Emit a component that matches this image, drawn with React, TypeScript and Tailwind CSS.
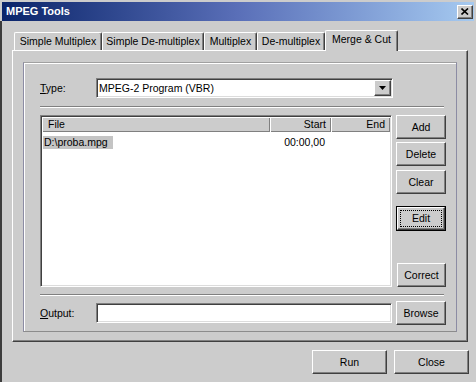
import React from "react";

const raised =
  "border border-t-white border-l-white border-r-[#404040] border-b-[#404040] shadow-[inset_-1px_-1px_0_#808080] bg-[#cccccc]";
const sunken =
  "border border-t-[#808080] border-l-[#808080] border-r-white border-b-white shadow-[inset_1px_1px_0_#404040,inset_-1px_-1px_0_#dcdcdc] p-[1px] bg-white";

function Btn({ label, className = "" }: { label: string; className?: string }) {
  return (
    <div className={`${raised} flex items-center justify-center ${className}`}>
      <span>{label}</span>
    </div>
  );
}

const tabs = [
  { label: "Simple Multiplex", w: "w-[88px]" },
  { label: "Simple De-multiplex", w: "w-[102px]" },
  { label: "Multiplex", w: "w-[53px]" },
  { label: "De-multiplex", w: "w-[68px]" },
];

export default function App() {
  return (
    <div className="w-[476px] h-[382px] bg-[#cccccc] overflow-hidden font-['Liberation_Sans',Arial,sans-serif] text-[10.5px] text-black leading-none select-none">
      {/* Title bar */}
      <div className="mx-[2px] mt-[2px] h-[19px] flex items-center justify-between bg-linear-to-r from-[#0a246a] via-[#5a6fb8] to-[#a6caf0]">
        <span className="pl-[4px] font-bold text-white text-[11px]">MPEG Tools</span>
        <div className={`${raised} w-[16px] h-[14px] mr-[1px] flex items-center justify-center`}>
          <svg width="8" height="7" viewBox="0 0 8 7">
            <path d="M0.5 0.5 L7 6.5 M7 0.5 L0.5 6.5" stroke="#000" strokeWidth="1.6" />
          </svg>
        </div>
      </div>

      {/* Body */}
      <div className="h-[361px] border-l-2 border-l-[#3c3c3c] pl-[10px] pr-[8px] pt-[9px]">
        {/* Tabs */}
        <div className="flex items-end h-[20px] pl-[2px]">
          {tabs.map((t) => (
            <div
              key={t.label}
              className={`${t.w} h-[18px] flex items-center justify-center rounded-t-[2px] border-t border-l border-r border-t-white border-l-white border-r-[#404040] shadow-[inset_-1px_0_0_#808080]`}
            >
              {t.label}
            </div>
          ))}
          <div className="relative z-10 w-[73px] h-[21px] -mb-[1px] pb-[3px] flex items-center justify-center rounded-t-[2px] bg-[#cccccc] border-t border-l border-r border-t-white border-l-white border-r-[#404040] shadow-[inset_-1px_0_0_#808080]">
            Merge &amp; Cut
          </div>
        </div>

        {/* Panel */}
        <div className="h-[292px] border border-t-white border-l-white border-r-[#404040] border-b-[#404040] shadow-[inset_-1px_-1px_0_#808080] pl-[10px] pt-[11px]">
          <div className="w-[434px] h-[270px] border border-t-[#a0a0a0] border-l-[#8c8ca4] border-r-[#8c8ca4] border-b-[#8c8c8c] shadow-[inset_1px_1px_0_#ffffff] pl-[16px] pt-[15px]">
            {/* Type row */}
            <div className="flex items-center h-[20px]">
              <div className="w-[56px]">
                <span className="underline underline-offset-[1px]">T</span>ype:
              </div>
              <div className={`${sunken} w-[297px] h-[20px] flex items-center justify-between`}>
                <span className="pl-[1px]">MPEG-2 Program (VBR)</span>
                <div className={`${raised} w-[17px] h-[16px] flex items-center justify-center`}>
                  <svg width="7" height="4" viewBox="0 0 7 4">
                    <path d="M0 0 H7 L3.5 4 Z" fill="#000" />
                  </svg>
                </div>
              </div>
            </div>

            <div className="mt-[8px] w-[404px] h-[2px] border-t border-t-[#808080] border-b border-b-white" />

            {/* List + buttons */}
            <div className="mt-[7px] flex">
              <div className={`${sunken} w-[352px] h-[172px]`}>
                <div className="flex h-[15px]">
                  <div className="w-[228px] h-full flex items-center pl-[6px] bg-[#cccccc] shadow-[inset_1px_1px_0_#ffffff,inset_-1px_-1px_0_#808080]">
                    File
                  </div>
                  <div className="w-[61px] h-full flex items-center justify-end pr-[5px] bg-[#cccccc] shadow-[inset_1px_1px_0_#ffffff,inset_-1px_-1px_0_#808080]">
                    Start
                  </div>
                  <div className="w-[59px] h-full flex items-center justify-end pr-[5px] bg-[#cccccc] shadow-[inset_1px_1px_0_#ffffff,inset_-1px_-1px_0_#808080]">
                    End
                  </div>
                </div>
                <div className="flex mt-[4px] h-[13px] items-center">
                  <div className="w-[228px] pl-[1px]">
                    <span className="inline-flex items-center h-[13px] bg-[#c4c4c4] pl-[1px] pr-[5px]">D:\proba.mpg</span>
                  </div>
                  <div className="w-[61px] text-right pr-[6px]">00:00,00</div>
                  <div className="w-[59px]" />
                </div>
              </div>

              <div className="ml-[4px] w-[50px] h-[172px] flex flex-col">
                <Btn label="Add" className="h-[24px]" />
                <Btn label="Delete" className="h-[24px] mt-[3px]" />
                <Btn label="Clear" className="h-[24px] mt-[4px]" />
                <div className="mt-[12px] h-[25px] border border-black">
                  <div className={`${raised} h-full p-[2px]`}>
                    <div className="h-full border border-dotted border-black flex items-center justify-center">Edit</div>
                  </div>
                </div>
                <Btn label="Correct" className="h-[24px] mt-auto ml-[1px]" />
              </div>
            </div>

            <div className="mt-[7px] w-[404px] h-[2px] border-t border-t-[#808080] border-b border-b-white" />

            {/* Output row */}
            <div className="mt-[5px] flex items-center h-[24px]">
              <div className="w-[56px]">
                <span className="underline underline-offset-[1px]">O</span>utput:
              </div>
              <div className={`${sunken} w-[296px] h-[20px]`} />
              <Btn label="Browse" className="ml-[4px] w-[50px] h-[24px]" />
            </div>
          </div>
        </div>

        {/* Bottom buttons */}
        <div className="mt-[8px] -mr-[1px] flex justify-end gap-[7px]">
          <Btn label="Run" className="w-[75px] h-[24px]" />
          <Btn label="Close" className="w-[75px] h-[24px]" />
        </div>
      </div>
    </div>
  );
}
